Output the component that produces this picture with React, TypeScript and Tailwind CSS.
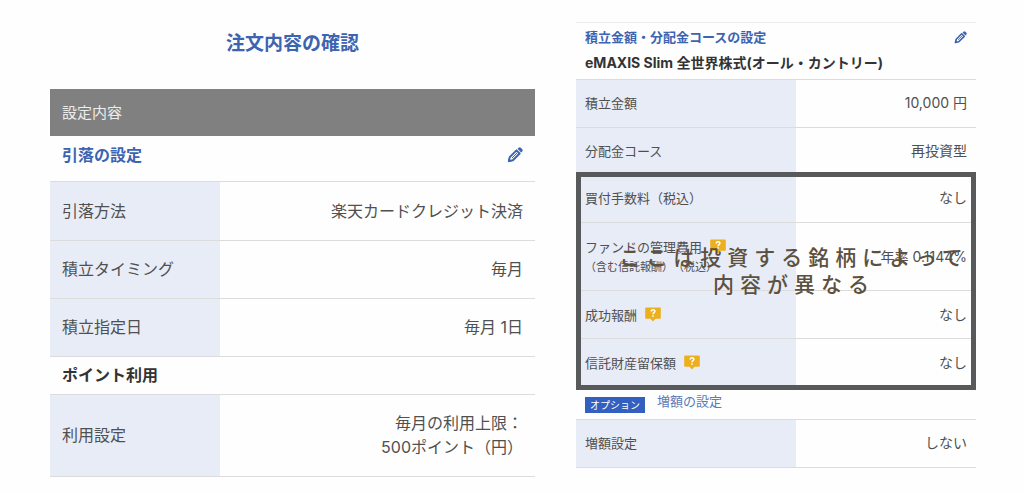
import type { ReactNode } from "react";

function PencilIcon({ className }: { className: string }) {
  return (
    <svg viewBox="0 0 24 24" className={className} aria-hidden="true">
      <path d="M2.800 21.200l1.300-6L14.200 5.100l4.700 4.700L8.800 19.900z" fill="none" stroke="currentColor" strokeWidth="3" strokeLinejoin="round" />
      <path d="M7.500 16.500l7.500-7.500" stroke="currentColor" strokeWidth="1.500" />
      <path d="M1.500 22.500l1.200-5.500 4.300 4.300z" fill="currentColor" />
      <path d="M15.800 2.800l1.600-1.600a2.400 2.400 0 0 1 3.400 0l2 2a2.400 2.400 0 0 1 0 3.400l-1.600 1.600z" fill="currentColor" />
    </svg>
  );
}

function HelpButton({ topic }: { topic: string }) {
  return (
    <button type="button" aria-label={`${topic}の説明`} className="ml-2 inline-block align-[-2px]">
      <svg viewBox="0 0 16 15" className="h-[15px] w-4" aria-hidden="true">
        <path d="M1 0.5h14a0.800 0.800 0 0 1 0.800 0.800v9.600a0.800 0.800 0 0 1-0.800 0.800H10.500L8 14.500 5.500 11.700H1a0.800 0.800 0 0 1-0.800-0.800v-9.600A0.800 0.800 0 0 1 1 0.500z" fill="#ecb01f" />
        <path d="M6.200 4.500C6.200 2.100 9.900 2.100 9.900 4.300 9.900 5.700 8 5.700 8 7.200" fill="none" stroke="#fff" strokeWidth="1.500" />
        <path d="M7.200 8.200h1.600v1.500H7.200z" fill="#fff" />
      </svg>
    </button>
  );
}

function EditButton({ label, className }: { label: string; className: string }) {
  return (
    <button type="button" aria-label={label} className="text-[#3c64b1]">
      <PencilIcon className={className} />
    </button>
  );
}

type RowProps = {
  label: ReactNode;
  labelStyle: string;
  valueStyle: string;
  height: string;
  children: ReactNode;
};

function Row({ label, labelStyle, valueStyle, height, children }: RowProps) {
  return (
    <tr className={`border-b border-[#dcdcdc] ${height}`}>
      <th scope="row" className={`bg-[#e8ecf7] text-left font-normal ${labelStyle}`}>{label}</th>
      <td className={`text-right ${valueStyle}`}>{children}</td>
    </tr>
  );
}

const left = { labelStyle: "w-[35%] px-3", valueStyle: "px-3" };
const right = { labelStyle: "w-[55%] px-[9px]", valueStyle: "px-[9px] text-sm" };

function WithdrawalSettings() {
  return (
    <section className="pt-[30px] text-base leading-6">
      <h1 className="text-center text-[19px] leading-7 font-bold text-[#3c64b1]">注文内容の確認</h1>
      <div className="mt-[31px] flex h-[47px] items-center bg-[#808080] px-3 text-[15px] text-[#ececec]">設定内容</div>
      <div className="flex h-[46px] items-center justify-between border-b border-[#dcdcdc] px-3 pb-2">
        <h2 className="font-bold text-[#3c64b1]">引落の設定</h2>
        <EditButton label="引落の設定を編集" className="size-4" />
      </div>
      <table className="w-full border-collapse">
        <tbody>
          <Row {...left} height="h-[58px]" label="引落方法">楽天カードクレジット決済</Row>
          <Row {...left} height="h-[58px]" label="積立タイミング">毎月</Row>
          <Row {...left} height="h-[58px]" label="積立指定日">毎月 1日</Row>
        </tbody>
      </table>
      <h2 className="flex h-[38px] items-center border-b border-[#dcdcdc] px-3 font-bold text-[#333]">ポイント利用</h2>
      <table className="w-full border-collapse">
        <tbody>
          <Row {...left} height="h-[82px]" label="利用設定">
            毎月の利用上限：
            <br />
            500ポイント（円）
          </Row>
        </tbody>
      </table>
    </section>
  );
}

function FundSettings() {
  return (
    <section className="pt-[22px] text-[13px] leading-5">
      <header className="flex h-[58px] items-start justify-between border-t border-b border-[#dcdcdc] border-t-[#eeeeee] px-[9px] pt-1">
        <div>
          <h2 className="font-bold text-[#3c64b1]">積立金額・分配金コースの設定</h2>
          <p className="pt-1.5 text-sm font-bold text-[#333]">eMAXIS Slim 全世界株式(オール・カントリー)</p>
        </div>
        <EditButton label="積立金額・分配金コースの設定を編集" className="mt-1 size-[13px]" />
      </header>
      <table className="w-full border-collapse">
        <tbody>
          <Row {...right} height="h-[47px]" label="積立金額">10,000 円</Row>
          <Row {...right} height="h-[47px]" label="分配金コース">再投資型</Row>
        </tbody>
      </table>
      <div className="relative">
        <table className="w-full border-collapse">
          <tbody>
            <Row {...right} height="h-12" label="買付手数料（税込）">なし</Row>
            <Row
              {...right}
              height="h-[68px]"
              label={
                <>
                  ファンドの管理費用
                  <HelpButton topic="ファンドの管理費用" />
                  <span className="block text-[11px]">（含む信託報酬）（税込）</span>
                </>
              }
            >
              年率 0.1144%
            </Row>
            <Row {...right} height="h-12" label={<>成功報酬<HelpButton topic="成功報酬" /></>}>なし</Row>
            <Row {...right} height="h-12" label={<>信託財産留保額<HelpButton topic="信託財産留保額" /></>}>なし</Row>
          </tbody>
        </table>
        <div className="pointer-events-none absolute inset-x-0 -top-[3px] -bottom-[3px] border-[5px] border-[#58595b]" />
        <p className="pointer-events-none absolute inset-x-0 top-[69px] pl-9 text-center text-[21px] leading-[27px] font-medium tracking-[6px] whitespace-nowrap text-[#5c5140]">
          ここは投資する銘柄によって
          <br />
          内容が異なる
        </p>
      </div>
      <div className="flex h-[33px] items-center gap-3 border-b border-[#dcdcdc] px-[9px]">
        <span className="mt-1 bg-[#325fc0] px-[5px] text-[10px] leading-4 text-white">オプション</span>
        <h2 className="pb-1 text-[#5a7bb8]">増額の設定</h2>
      </div>
      <table className="w-full border-collapse">
        <tbody>
          <Row {...right} height="h-[47px]" label="増額設定">しない</Row>
        </tbody>
      </table>
    </section>
  );
}

export default function App() {
  return (
    <main className="grid min-h-screen grid-cols-[485fr_400fr] gap-[41px] bg-[#fefefe] pr-12 pl-[50px] font-['Inter','Noto_Sans_CJK_JP',sans-serif] text-[#505050] [text-spacing-trim:space-all]">
      <WithdrawalSettings />
      <FundSettings />
    </main>
  );
}
